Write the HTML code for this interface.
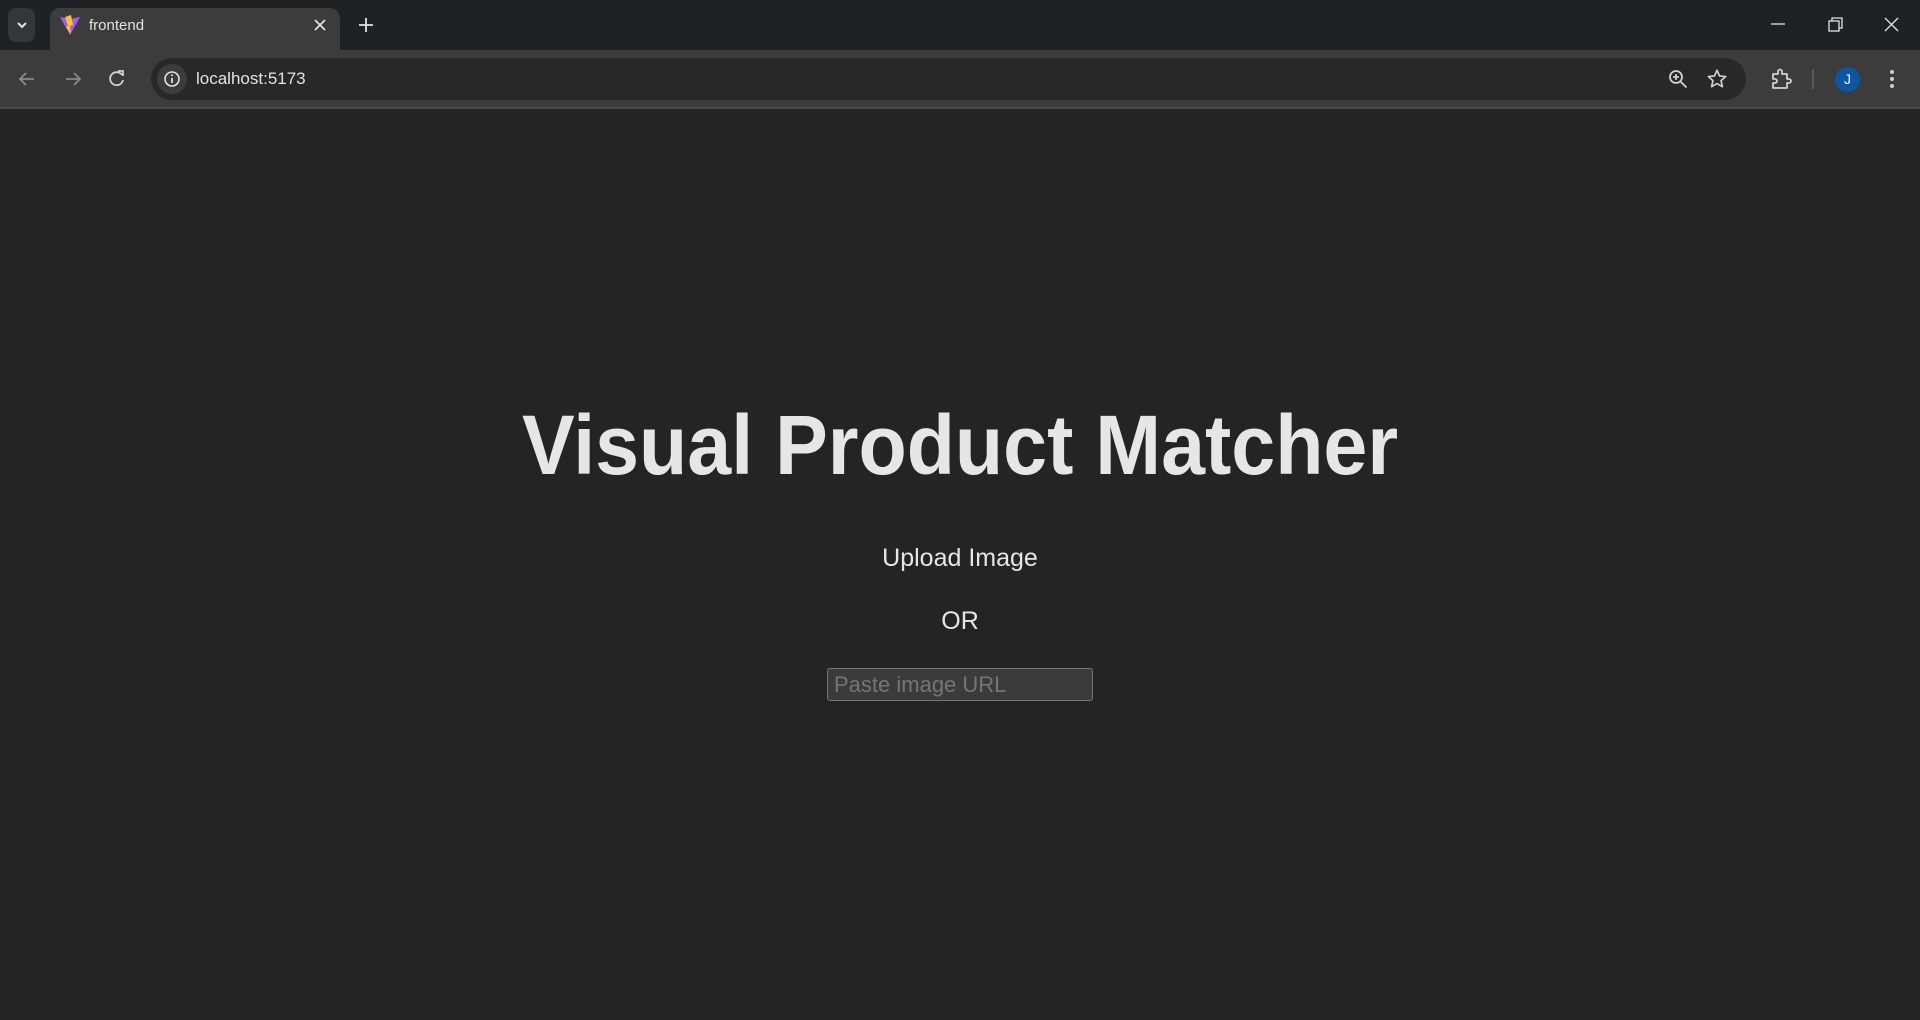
<!DOCTYPE html>
<html><head><meta charset="utf-8"><style>
*{margin:0;padding:0;box-sizing:border-box}
body{width:1920px;height:1020px;background:#242424;font-family:"Liberation Sans",sans-serif;overflow:hidden;position:relative}
.tabstrip{position:absolute;left:0;top:0;width:1920px;height:50px;background:#202124}
.toolbar{position:absolute;left:0;top:50px;width:1920px;height:57px;background:#3c3c3c}
.line{position:absolute;left:0;top:107px;width:1920px;height:2px;background:#4a4a4a}
.tab{position:absolute;left:50px;top:8px;width:290px;height:44px;background:#3c3c3c;border-radius:10px 10px 0 0}
.addr{position:absolute;left:151px;top:58px;width:1595px;height:42px;background:#282828;border-radius:21px}
.t{position:absolute;color:#e3e3e3}
.ab{position:absolute;color:#e6e6e6;white-space:nowrap}
</style></head><body>
<div class="tabstrip"></div>
<div style="position:absolute;left:8px;top:8px;width:27px;height:34px;background:#35363a;border-radius:8px"></div>
<svg style="position:absolute;left:15px;top:18px" width="14" height="14" viewBox="0 0 14 14"><path d="M3 5l4 4 4-4" stroke="#e3e3e3" stroke-width="2" fill="none"/></svg>
<div class="tab"></div>
<svg style="position:absolute;left:59px;top:14px" width="22" height="22" viewBox="0 0 22 22"><path d="M1 3l10 18 10-18-10 2z" fill="#a259ff"/><path d="M12 1l-6 2 3 9 -2 1 5 7 -1-8 3-1z" fill="#ffc517"/></svg>
<div class="t" style="left:89px;top:17px;font-size:15px">frontend</div>
<svg style="position:absolute;left:313px;top:18px" width="14" height="14" viewBox="0 0 14 14"><path d="M2 2l10 10M12 2L2 12" stroke="#e3e3e3" stroke-width="1.7"/></svg>
<svg style="position:absolute;left:358px;top:17px" width="16" height="16" viewBox="0 0 16 16"><path d="M8 1v14M1 8h14" stroke="#e3e3e3" stroke-width="1.8"/></svg>
<svg style="position:absolute;left:1770px;top:16px" width="140" height="18" viewBox="0 0 140 18"><path d="M1 8h14" stroke="#e3e3e3" stroke-width="1.3"/><rect x="59" y="5" width="10" height="10" stroke="#e3e3e3" fill="none" stroke-width="1.3"/><path d="M62 5V2h10v10h-3" stroke="#e3e3e3" fill="none" stroke-width="1.3"/><path d="M115 2l13 13M128 2l-13 13" stroke="#e3e3e3" stroke-width="1.3"/></svg>
<div class="toolbar"></div>
<div class="line"></div>
<svg style="position:absolute;left:16px;top:69px" width="110" height="20" viewBox="0 0 110 20"><path d="M18 10H4M10 4l-6 6 6 6" stroke="#8a8a8a" stroke-width="1.8" fill="none"/><path d="M50 10h14M58 4l6 6-6 6" stroke="#8a8a8a" stroke-width="1.8" fill="none"/><path d="M106 6a6.5 6.5 0 1 0 1 5" stroke="#d0d0d0" stroke-width="1.8" fill="none"/><path d="M102 2h5v5" stroke="#d0d0d0" stroke-width="1.8" fill="none"/></svg>
<div class="addr"></div>
<div style="position:absolute;left:157px;top:64px;width:30px;height:30px;border-radius:50%;background:#3c3c3c"></div>
<svg style="position:absolute;left:163px;top:70px" width="18" height="18" viewBox="0 0 18 18"><circle cx="9" cy="9" r="7" stroke="#e3e3e3" stroke-width="1.6" fill="none"/><path d="M9 8v5" stroke="#e3e3e3" stroke-width="1.8"/><circle cx="9" cy="5.3" r="1" fill="#e3e3e3"/></svg>
<div class="t" style="left:196px;top:69px;font-size:17px">localhost:5173</div>
<svg style="position:absolute;left:1667px;top:68px" width="22" height="22" viewBox="0 0 22 22"><circle cx="9" cy="9" r="6" stroke="#d0d0d0" stroke-width="1.8" fill="none"/><path d="M13.5 13.5l6 6M9 6v6M6 9h6" stroke="#d0d0d0" stroke-width="1.8"/></svg>
<svg style="position:absolute;left:1706px;top:68px" width="22" height="22" viewBox="0 0 24 24"><path d="M12 2.5l2.8 6.2 6.7.6-5.1 4.5 1.5 6.6L12 17l-5.9 3.4 1.5-6.6L2.5 9.3l6.7-.6z" stroke="#d0d0d0" stroke-width="1.8" fill="none" stroke-linejoin="round"/></svg>
<svg style="position:absolute;left:1770px;top:67px" width="24" height="24" viewBox="0 0 24 24"><path d="M3 7h5V4.5a2 2 0 0 1 4 0V7h5v5h2a2 2 0 0 1 0 4h-2v5H3v-5h2a2 2 0 0 0 0-4H3z" stroke="#d0d0d0" stroke-width="1.8" fill="none" stroke-linejoin="round"/></svg>
<div style="position:absolute;left:1812px;top:69px;width:2px;height:20px;background:#5a5a5a"></div>
<div style="position:absolute;left:1835px;top:67px;width:25px;height:25px;border-radius:50%;background:#0b57a3;color:#fff;font-size:14px;text-align:center;line-height:25px">J</div>
<svg style="position:absolute;left:1888px;top:68px" width="8" height="22" viewBox="0 0 8 22"><circle cx="4" cy="4" r="2" fill="#d0d0d0"/><circle cx="4" cy="11" r="2" fill="#d0d0d0"/><circle cx="4" cy="18" r="2" fill="#d0d0d0"/></svg>

<div class="ab" style="left:0;width:1920px;text-align:center;top:395px;font-size:84px;font-weight:bold;line-height:100px"><span style="display:inline-block;transform:scaleX(0.94);color:#e6e6e6">Visual Product Matcher</span></div>
<div class="ab" style="left:0;width:1920px;text-align:center;top:543px;font-size:25px;line-height:30px">Upload Image</div>
<div class="ab" style="left:0;width:1920px;text-align:center;top:606px;font-size:25px;line-height:30px">OR</div>
<div style="position:absolute;left:827px;top:668px;width:266px;height:33px;background:#3b3b3b;border:1.5px solid #767676;border-radius:3px"></div>
<div style="position:absolute;left:834px;top:671px;font-size:22px;line-height:28px;color:#757575">Paste image URL</div>
</body></html>
